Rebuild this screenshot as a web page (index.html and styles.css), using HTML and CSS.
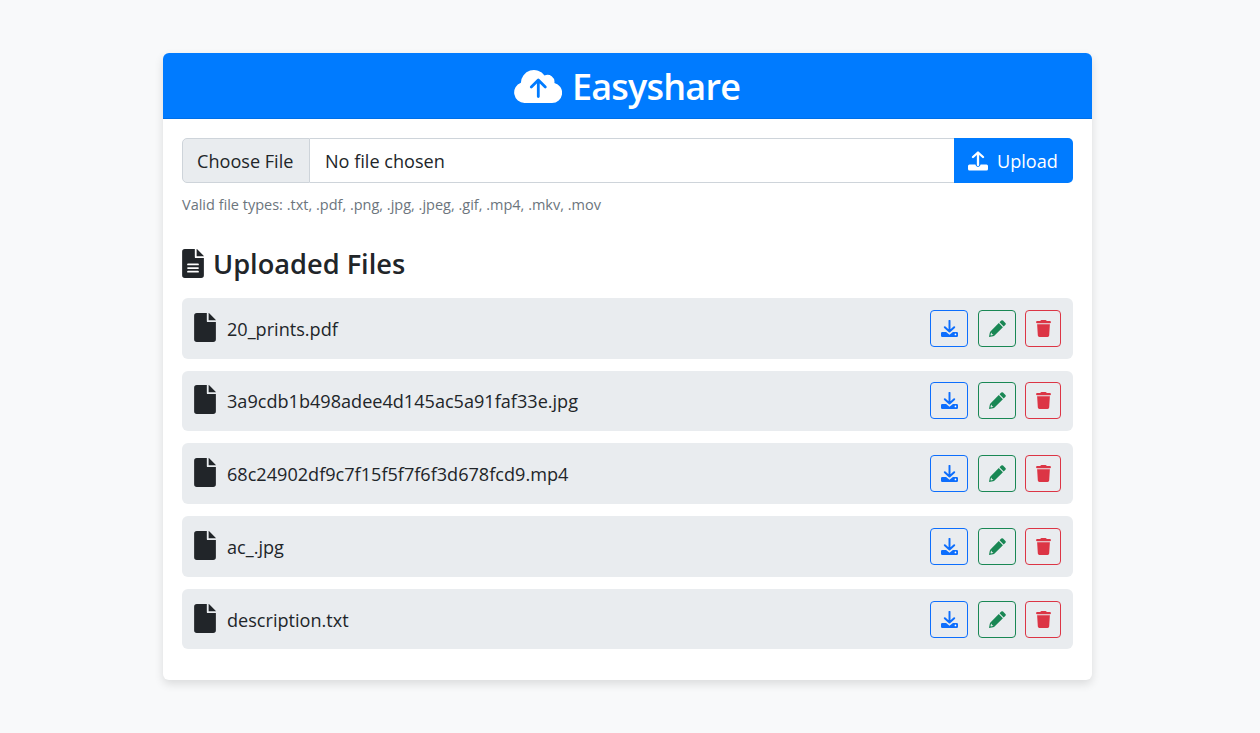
FILE: index.html
```html
<!DOCTYPE html>
<html lang="en">
<head>
<meta charset="utf-8">
<title>Easyshare</title>
<link rel="stylesheet" href="styles.css">
</head>
<body>
<svg class="sprite" aria-hidden="true">
  <symbol id="file" viewBox="0 0 384 512"><path d="M48 0H224V144q0 16 16 16H384V464q0 48-48 48H48q-48 0-48-48V48Q0 0 48 0ZM262 0L384 122V128H256V0Z"/></symbol>
  <symbol id="lines" viewBox="0 0 384 512"><path fill-rule="evenodd" d="M48 0H224V144q0 16 16 16H384V464q0 48-48 48H48q-48 0-48-48V48Q0 0 48 0ZM262 0L384 122V128H256V0ZM104 256q-16 0-16 16t16 16H280q16 0 16-16t-16-16ZM104 320q-16 0-16 16t16 16H280q16 0 16-16t-16-16ZM104 384q-16 0-16 16t16 16H280q16 0 16-16t-16-16Z"/></symbol>
  <symbol id="upload" viewBox="0 0 20 20"><path d="M1.5 13.5H7.5V14Q10 18 12.5 14V13.5H18.5Q20 13.5 20 15V18Q20 19.5 18.5 19.5H1.5Q0 19.5 0 18V15Q0 13.5 1.5 13.5Z"/><path class="stroke" d="M10 14V2M5 6L10 1.5L15 6"/><circle class="dot" cx="17" cy="16.7" r=".9"/></symbol>
  <symbol id="download" viewBox="0 0 20 20"><path d="M1.5 14H6L10 17.3L14 14H18.5Q20 14 20 15.5V18.5Q20 20 18.5 20H1.5Q0 20 0 18.5V15.5Q0 14 1.5 14Z"/><path class="stroke" d="M10 1V13.5M4.5 8.5L10 13.5L15.5 8.5"/><circle class="dot" cx="17" cy="17" r="1"/></symbol>
  <symbol id="pencil" viewBox="0 0 512 512"><path fill-rule="evenodd" d="M370 17Q396-8 422 17L495 90Q520 116 495 142L442 195L317 70ZM294 93L419 218L168 469Q151 484 124 490L0 512L22 388Q28 361 43 344ZM84 380L58 400L46 454L58 466L112 454L132 428H84Z"/></symbol>
  <symbol id="trash" viewBox="0 0 448 512"><path d="M135 18Q144 0 164 0H284Q304 0 313 18L320 32H416Q448 32 448 64T416 96H32Q0 96 0 64T32 32H128ZM32 128H416L395 467Q392 512 347 512H101Q56 512 53 467Z"/></symbol>
</svg>
<main class="card">
  <header class="card-header">
    <svg class="cloud" viewBox="0 0 48 34"><path d="M10.5 34A10.5 10.5 0 0 1 6.9 13.7A13 13 0 0 1 30.5 6.5A7 7 0 0 1 40.4 13.9A10.2 10.2 0 0 1 38 34Z"/><path class="cloud-arrow" d="M24.3 27.5V11.5M17.3 18L24.3 11L31.3 18"/></svg>
    <h1 class="title">Easyshare</h1>
  </header>
  <div class="card-body">
    <div class="input-group">
      <div class="choose">Choose File</div>
      <div class="filename">No file chosen</div>
      <button class="upload"><svg class="upload-icon"><use href="#upload"/></svg><span>Upload</span></button>
    </div>
    <p class="hint">Valid file types: .txt, .pdf, .png, .jpg, .jpeg, .gif, .mp4, .mkv, .mov</p>
    <h2 class="subtitle"><svg class="file-icon"><use href="#lines"/></svg><span>Uploaded Files</span></h2>
    <ul class="files">
      <li class="file"><svg class="file-icon"><use href="#file"/></svg><span class="name">20_prints.pdf</span><div class="actions"><button class="btn download"><svg class="icon"><use href="#download"/></svg></button><button class="btn edit"><svg class="icon"><use href="#pencil"/></svg></button><button class="btn delete"><svg class="icon bin"><use href="#trash"/></svg></button></div></li>
      <li class="file"><svg class="file-icon"><use href="#file"/></svg><span class="name">3a9cdb1b498adee4d145ac5a91faf33e.jpg</span><div class="actions"><button class="btn download"><svg class="icon"><use href="#download"/></svg></button><button class="btn edit"><svg class="icon"><use href="#pencil"/></svg></button><button class="btn delete"><svg class="icon bin"><use href="#trash"/></svg></button></div></li>
      <li class="file"><svg class="file-icon"><use href="#file"/></svg><span class="name">68c24902df9c7f15f5f7f6f3d678fcd9.mp4</span><div class="actions"><button class="btn download"><svg class="icon"><use href="#download"/></svg></button><button class="btn edit"><svg class="icon"><use href="#pencil"/></svg></button><button class="btn delete"><svg class="icon bin"><use href="#trash"/></svg></button></div></li>
      <li class="file"><svg class="file-icon"><use href="#file"/></svg><span class="name">ac_.jpg</span><div class="actions"><button class="btn download"><svg class="icon"><use href="#download"/></svg></button><button class="btn edit"><svg class="icon"><use href="#pencil"/></svg></button><button class="btn delete"><svg class="icon bin"><use href="#trash"/></svg></button></div></li>
      <li class="file"><svg class="file-icon"><use href="#file"/></svg><span class="name">description.txt</span><div class="actions"><button class="btn download"><svg class="icon"><use href="#download"/></svg></button><button class="btn edit"><svg class="icon"><use href="#pencil"/></svg></button><button class="btn delete"><svg class="icon bin"><use href="#trash"/></svg></button></div></li>
    </ul>
  </div>
</main>
</body>
</html>
```
FILE: styles.css
```css
* { box-sizing: border-box; }
body { margin: 0; height: 733px; padding: 53px 168px 53px 163px; background: #f8f9fa; color: #212529; font: 400 18.1px/27px "Open Sans", "Noto Sans", sans-serif; overflow: hidden; }
.sprite { display: none; }
svg { flex: none; fill: currentColor; }
button { font: inherit; }
.card { width: 929px; height: 627px; background: #fff; border-radius: 6px; box-shadow: 0 4px 10px rgba(0,0,0,.12); overflow: hidden; }
.card-header { height: 66px; display: flex; align-items: center; padding-left: 351px; gap: 10px; color: #fff; background: #007bff; border-bottom: 1px solid #006fe6; }
.cloud { width: 48px; height: 34px; }
.cloud-arrow { fill: none; stroke: #007bff; stroke-width: 2.8; stroke-linecap: round; stroke-linejoin: round; }
.title { margin: 0; padding-top: 2px; font-size: 36px; line-height: 48px; font-weight: 600; letter-spacing: -.8px; }
.card-body { padding: 19px; }
.input-group { display: flex; height: 45px; }
.choose { width: 128px; display: flex; align-items: center; padding: 2px 0 0 14px; border: 1px solid #ced4da; border-radius: 5px 0 0 5px; background: #e9ecef; white-space: nowrap; }
.filename { flex: 1; display: flex; align-items: center; padding: 2px 0 0 15px; border: 1px solid #ced4da; border-width: 1px 0; }
.upload { width: 119px; display: flex; align-items: center; gap: 9px; padding: 2px 0 0 14px; border: 0; border-radius: 0 5px 5px 0; background: #007bff; color: #fff; }
.upload-icon { width: 20px; height: 20px; margin-bottom: 2px; }
.stroke { fill: none; stroke: currentColor; stroke-width: 2.3; stroke-linecap: round; stroke-linejoin: round; }
.dot { fill: #fff; }
.upload .dot { fill: #007bff; }
.hint { margin: 10px 0 0; font-size: 14.5px; line-height: 24px; color: #6c757d; white-space: nowrap; }
.subtitle { margin: 29px 0 0; height: 35px; display: flex; align-items: center; gap: 9px; font-size: 27.2px; line-height: 35px; font-weight: 600; }
.file-icon { width: 22px; height: 29px; }
.files { margin: 17px 0 0; padding: 0; list-style: none; display: grid; grid-auto-rows: 60.5px; gap: 12.2px; }
.file { display: flex; align-items: center; padding: 0 12px; border-radius: 6px; background: #e9ecef; }
.file .file-icon { margin: 0 11px 2px 0; }
.name { padding-top: 2px; white-space: nowrap; }
.actions { margin-left: auto; display: flex; }
.btn { width: 38px; height: 37px; padding: 0; display: grid; place-items: center; border: 1px solid currentColor; border-radius: 4px; background: none; }
.icon { width: 17px; height: 17px; }
.bin { width: 15px; }
.download { margin-right: 10px; color: #0d6efd; }
.edit { margin-right: 9px; color: #198754; }
.delete { width: 36px; color: #dc3545; }
```
